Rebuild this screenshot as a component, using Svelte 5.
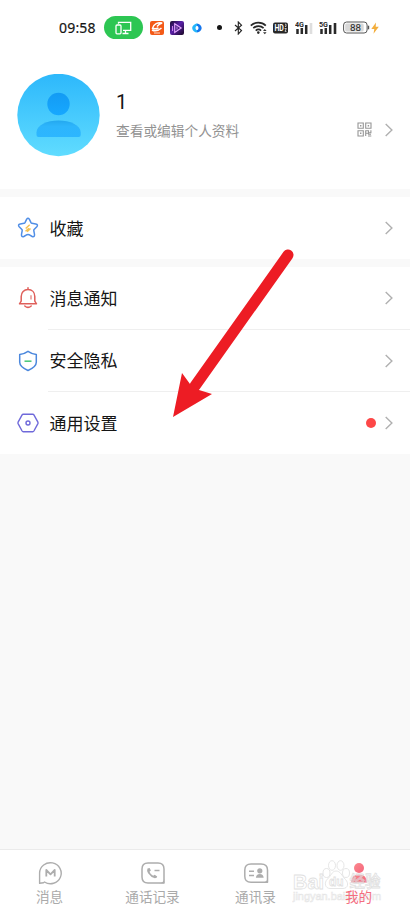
<script>
  const groups = [
    [{ icon: 'star', label: '收藏' }],
    [
      { icon: 'bell', label: '消息通知' },
      { icon: 'shield', label: '安全隐私' },
      { icon: 'hex', label: '通用设置', dot: true }
    ]
  ];
  const tabs = [
    { icon: 'message', label: '消息' },
    { icon: 'calls', label: '通话记录' },
    { icon: 'contacts', label: '通讯录' },
    { icon: 'me', label: '我的', active: true }
  ];
</script>

{#snippet chevron()}
  <svg class="chevron" width="10" height="14" viewBox="0 0 10 14"><path d="M1.700 1 7.900 7 1.700 13" fill="none" stroke="#b0b0b0" stroke-width="1.400" /></svg>
{/snippet}

{#snippet signal(name, last)}
  <svg class="signal" width="19" height="16" viewBox="0 0 19 16">
    <text x="0" y="7" font-size="8" font-weight="700" fill="#292929" textLength="9" lengthAdjust="spacingAndGlyphs">{name}</text>
    <path d="M2.500 9v5M6.800 8v6M11.200 5v9" stroke="#292929" stroke-width="2.500" />
    <path d="M16 3v11" stroke={last} stroke-width="2.600" />
  </svg>
{/snippet}

<main class="screen">
  <header class="status">
    <span class="time">09:58</span>
    <span class="cast">
      <svg width="17" height="14" viewBox="0 0 17 14" fill="none" stroke="#fff" stroke-width="1.300"><path d="M3.500 2.700V1.400h12.200v8H8M10.500 9.500v3M7.500 12.500h6" /><rect x="1" y="4" width="5" height="8.800" rx="1" /></svg>
    </span>
    <svg class="app1" width="14" height="14" viewBox="0 0 14 14"><rect width="14" height="14" rx="2" fill="#f35a18" /><path d="M12.200 2C8 .8 3.500 3 2.500 7.300c1.700.8 4 .6 6-.3M7 5.500C8.300 3.800 10 2.700 12.200 2M2 9c3 1.600 6.700.5 9.500-2" fill="none" stroke="#fff" stroke-width="1.500" /><path d="M4 12h6" stroke="#fff" stroke-width=".8" /></svg>
    <svg class="app2" width="14" height="14" viewBox="0 0 14 14"><defs><linearGradient id="vid" x2="1" y2="1"><stop stop-color="#170b2c" /><stop offset=".45" stop-color="#5a20a9" /><stop offset="1" stop-color="#180720" /></linearGradient></defs><rect width="14" height="14" rx="2" fill="url(#vid)" /><path d="m4.700 2.800 6.500 4.200-6.500 4.500Z" fill="#442080" stroke="#e8a9ff" stroke-width="1.100" /><path d="M2.500 5v5M7 5.500v3" stroke="#d98ff5" stroke-width=".9" /></svg>
    <svg class="app3" width="10" height="10" viewBox="0 0 10 10"><path d="M5 .4C3 .4 0 3 .2 5.200.4 7.800 2.800 9.500 5 9.500V7.200L3.500 5 5 3Z" fill="#24b6fa" /><path d="M5 .4c2.500.3 4.700 2.400 4.700 4.600S7.600 9.300 5 9.500V7.200L6.500 5 5 3Z" fill="#1576ed" /><ellipse cx="5" cy="5" rx="1.400" ry="2" fill="#fff" /></svg>
    <i class="notice"></i>
    <svg class="bt" width="9" height="14" viewBox="0 0 9 14"><path d="m1 4 6.500 5.600L4.300 13V1l3.200 3.200L1 10" fill="none" stroke="#252525" stroke-width="1.150" /></svg>
    <svg class="wifi" width="18" height="14" viewBox="0 0 18 14"><path d="M.8 4.600c4-4 11-4 15 0M3.300 7.200c3-2.800 7.500-2.800 10.300 0M5.700 9.600c1.700-1.500 3.800-1.500 5.400 0" fill="none" stroke="#282828" stroke-width="1.700" /><circle cx="8.300" cy="11.600" r="1.300" fill="#282828" /><path d="m13 10 1.800-2 1.800 2ZM13 11.300l1.800 2 1.800-2Z" fill="#333" /></svg>
    <svg class="hd" width="15" height="12" viewBox="0 0 15 12"><rect y=".5" width="15" height="11" rx="2" fill="#282828" /><text x="1.400" y="9" font-size="8.500" font-weight="700" fill="#fff" textLength="9.500" lengthAdjust="spacingAndGlyphs">HD</text><path d="M12 2.200h1v2.300h-1M11.600 6.500h1.700L12 9.400h1.500" stroke="#fff" stroke-width=".7" fill="none" /></svg>
    {@render signal('4G', '#dedede')}
    {@render signal('5G', '#292929')}
    <svg class="battery" width="27" height="13" viewBox="0 0 27 13"><rect x=".6" y="1" width="23.500" height="11" rx="3" fill="#fff" stroke="#555" stroke-width="1" /><rect x="2.200" y="2.600" width="18.500" height="7.800" rx="1.500" fill="#d8d8d8" /><path d="M25.500 4.700v3.600" stroke="#555" stroke-width="1.400" /><text x="7" y="9.800" font-size="9" fill="#222" textLength="11" lengthAdjust="spacingAndGlyphs">88</text></svg>
    <svg class="bolt" width="8" height="12" viewBox="0 0 8 12"><path d="M5 .4.300 7h3l-.8 4.800L7.800 4.700H4.700Z" fill="#f3ae3d" /></svg>
  </header>

  <section class="profile">
    <svg class="avatar" width="83" height="83" viewBox="0 0 83 83">
      <defs>
        <linearGradient id="sky" x2="0" y2="1"><stop stop-color="#2db8fb" /><stop offset="1" stop-color="#60dcff" /></linearGradient>
        <linearGradient id="head" x2="0" y2="1"><stop stop-color="#139bf4" /><stop offset="1" stop-color="#17a8ff" /></linearGradient>
        <linearGradient id="body" x2="0" y2="1"><stop stop-color="#24a8ef" /><stop offset=".35" stop-color="#2db5fc" /><stop offset="1" stop-color="#2cb6ff" /></linearGradient>
      </defs>
      <circle cx="41.500" cy="41" r="41.200" fill="url(#sky)" /><circle cx="41.500" cy="30" r="11.200" fill="url(#head)" />
      <path d="M19.500 61v-2.500C19.500 51 30 46.500 41.500 46.500S63.700 51 63.700 58.500V61q0 2-2 2H21.500q-2 0-2-2Z" fill="url(#body)" />
    </svg>
    <div class="who"><div class="name">1</div><div class="hint">查看或编辑个人资料</div></div>
    <svg class="qr" width="15" height="15" viewBox="0 0 15 15" fill="none" stroke="#969696" stroke-width="1.100"><path d="M1 1h5.300v5.300H1ZM8.700 1H14v5.300H8.700ZM1 8.700h5.300V14H1ZM8.700 14V8.700h2.800v2.500H8.700M13.900 8.200v2.500h-2.400v1.500H14M11 14h3.300" /><path d="M3 3.700h1.400M10.700 3.700h1.400M3 11.300h1.400" stroke-width="1.400" /></svg>
    {@render chevron()}
  </section>

  {#each groups as group}
    <section class="group">
      {#each group as row}
        <div class="row">
          <svg class="row-icon" width="22" height="22" viewBox="0 0 22 22" fill="none" stroke-width="1.400" stroke-linejoin="round">
            {#if row.icon === 'star'}
              <path d="M9.700 2.200q1.300-1.900 2.600 0l1.700 3.500q.3.500.9.600l3.900.6q2.700.7 1 2.800l-2.700 2.800q-.4.500-.3 1.100l.7 3.800q.3 2.900-2.300 2.100L12 17.700q-1-.4-2 0l-3.200 1.800q-2.600.8-2.300-2.100l.7-3.800q.1-.6-.3-1.100L2.200 9.700q-1.700-2.100 1-2.800l3.900-.6q.6-.1.900-.6Z" stroke="#508ee6" stroke-width="1.500" />
              <path d="m12.700 7.800-4 3.700M12 11.300l-3.500 3M13.500 11.500l-3.400 3.200" stroke="#f5c151" stroke-width="1.500" />
            {:else if row.icon === 'bell'}
              <path d="M2.500 16.800h17l-1.700-2.700V9.500c0-4.200-2.800-7-6.800-7s-6.800 2.800-6.800 7v4.600ZM11 .8v1.500M7.800 19q3.200 2.800 6.400 0" stroke="#df5f5a" stroke-width="1.500" stroke-linecap="round" /><path d="M14 8.200v4.300" stroke="#e58b86" />
            {:else if row.icon === 'shield'}
              <path d="M11 1.300q3.700 2.600 8.300 3.200v7.700q0 4.500-8.300 8.300-8.300-3.800-8.300-8.300V4.500Q7.300 3.900 11 1.300Z" stroke="#4c88dd" stroke-width="1.500" /><path d="M7.500 11.200h7" stroke="#4fc97d" stroke-width="1.600" />
            {:else}
              <path d="M6.200 2.200h9.600q.7 0 1.100.7l4 7.300q.3.700 0 1.400l-4 7.400q-.4.700-1.100.7H6.200q-.7 0-1.100-.7l-4-7.400q-.3-.7 0-1.400l4-7.300q.4-.7 1.100-.7Z" stroke="#6f69da" /><circle cx="11" cy="11" r="2" stroke="#6f69da" />
            {/if}
          </svg>
          <div class="cell"><span class="label">{row.label}</span>{#if row.dot}<i class="badge"></i>{/if}{@render chevron()}</div>
        </div>
      {/each}
    </section>
  {/each}

  <nav class="tabs">
    {#each tabs as tab}
      <div class="tab" class:active={tab.active}>
        <svg width="26" height="24" viewBox="0 0 26 24" fill="none" stroke="#adadad" stroke-width="1.500" stroke-linejoin="round">
          {#if tab.icon === 'message'}
            <path d="M2.600 22.300V12A10.800 10.500 0 1 1 7.500 21L6.500 21.700 2.600 22.300Z" stroke-width="1.400" /><path d="M9.300 15.500V9l4.200 4.300L17.700 9v6.500" stroke-width="1.800" />
          {:else if tab.icon === 'calls'}
            <path d="M8 2h10q6 0 6 6v14H8q-6 0-6-6V8q0-6 6-6Z" /><path d="M19 22.200q4 0 5.200-4v4Z" fill="#adadad" stroke="none" /><path d="M7.500 7.500q-1 2 .6 4.700 2.700 4 6.800 5 2.300 0 2.300-1.800l-2.500-1.700-1.600 1q-2.600-1.200-3.600-4l1.400-1.100-1.300-2.700Z" fill="#adadad" stroke="none" /><path d="M14.500 9.500h5" />
          {:else if tab.icon === 'contacts'}
            <path d="M8 3h10q6.500 0 6.500 6v12.300H8q-6.200 0-6.200-6V9Q1.800 3 8 3Z" /><path d="M20 21.500q3.800-.5 4.700-4v4Z" fill="#adadad" stroke="none" /><path d="M6 10.200h5M6 14.500h5" /><circle cx="16.800" cy="9.800" r="2.600" fill="#adadad" stroke="none" /><path d="M12.900 16.700q.3-3.800 3.900-3.800t3.900 3.800Z" fill="#adadad" stroke="none" />
          {:else}
            <defs><linearGradient id="pink" x2="1" y2="1"><stop stop-color="#fb8a8e" /><stop offset="1" stop-color="#f5647c" /></linearGradient></defs>
            <circle cx="13" cy="7" r="5" fill="url(#pink)" stroke="none" /><path d="M5 21.500q.3-8 8-8t8 8Z" fill="url(#pink)" stroke="none" />
          {/if}
        </svg>
        <span>{tab.label}</span>
      </div>
    {/each}
  </nav>

  <svg class="watermark" width="94" height="46" viewBox="0 0 94 46">
    <g fill="#fff" fill-opacity=".65" stroke="#d6d6d6" stroke-width=".8">
      <text x="1" y="30.500" font-size="21" font-weight="700" textLength="31" lengthAdjust="spacingAndGlyphs">Bai</text>
      <ellipse cx="34.500" cy="15" rx="3.500" ry="4.500" /><ellipse cx="40" cy="7.500" rx="3.500" ry="4.800" /><ellipse cx="48.500" cy="7.500" rx="3.500" ry="4.800" /><ellipse cx="54" cy="15" rx="3.500" ry="4.500" />
      <path d="M44 13c-4 0-5 5-8.500 8-4 4-2 9.500 2.500 9.500h13c5 0 6-5.500 2.500-9-4-4-5-8.500-9.500-8.500Z" />
      <text x="37" y="28" font-size="13" font-weight="700" textLength="14.500" lengthAdjust="spacingAndGlyphs">du</text>
      <text x="57.500" y="29" font-size="16" font-weight="500" textLength="31" lengthAdjust="spacingAndGlyphs">经验</text>
    </g>
    <text x="1" y="42" font-size="11" fill="#fff" stroke="#ddd" stroke-width=".6" textLength="88" lengthAdjust="spacingAndGlyphs">jingyan.baidu.com</text>
  </svg>
  <svg class="arrow" width="124" height="172" viewBox="0 0 124 172"><path d="M117 9 24 140" stroke="#ed1c24" stroke-width="11" stroke-linecap="round" /><path d="m2 171 9-44 8 11 9 6 13 4Z" fill="#ed1c24" /></svg>
</main>

<style>
  :global(body) { margin: 0; }
  .screen { position: relative; width: 410px; height: 914px; display: flex; flex-direction: column; overflow: hidden; background: #f9f9f9; color: #151515; font-family: Roboto, "Noto Sans CJK SC", sans-serif; }
  svg { display: block; flex: none; }
  .status { height: 55px; box-sizing: border-box; padding-left: 59px; display: flex; align-items: center; background: #fff; }
  .time { width: 45px; font: 400 14px/20px "Noto Sans", sans-serif; letter-spacing: .2px; -webkit-text-stroke: .2px; }
  .cast { width: 39px; height: 23px; display: grid; place-items: center; border-radius: 12px; background: #2dc653; }
  .app1 { margin-left: 7px; }
  .app2 { margin-left: 6px; }
  .app3 { margin-left: 8px; }
  .notice { width: 5px; height: 5px; margin: 0 12px 0 15px; border-radius: 50%; background: #151515; }
  .wifi { margin-left: 7px; }
  .hd { margin: 0 7px 0 5px; }
  .signal { margin-right: 5px; }
  .bolt { margin-left: 1px; }
  .profile { height: 134px; box-sizing: border-box; padding: 0 16px 0 17px; display: flex; align-items: flex-start; background: #fff; }
  .avatar { margin-top: 19px; }
  .who { flex: 1; margin: 35px 0 0 16px; }
  .name { font-size: 20px; line-height: 25px; }
  .hint { margin-top: 6px; font-size: 13.700px; line-height: 21px; color: #929292; }
  .qr { margin: 67px 12px 0 0; }
  .profile :global(.chevron) { margin-top: 68px; }
  .group { margin-top: 8px; padding-left: 17px; background: #fff; }
  .row { display: flex; align-items: center; height: 62px; }
  .row + .row { height: 62.400px; }
  .row-icon { position: relative; top: .4px; margin-left: -.5px; }
  .cell { display: flex; align-items: center; flex: 1; height: 100%; box-sizing: border-box; margin-left: 9.500px; padding: 0 16px 0 1.500px; }
  .row + .row .cell { padding-top: 1px; background: linear-gradient(#efefef, #efefef) top / 100% 1px no-repeat; }
  .label { flex: 1; padding-top: 1.500px; font-size: 17px; line-height: 24px; }
  .badge { width: 10px; height: 10px; margin-right: 8px; border-radius: 50%; background: #fd4747; }
  .tabs { display: flex; height: 65px; box-sizing: border-box; margin-top: auto; margin-left: -2px; border-top: 1px solid #ebebeb; background: #fff; }
  .tab { flex: 1; display: flex; flex-direction: column; align-items: center; padding-top: 11px; color: #aaa; font-size: 13.600px; line-height: 20px; }
  .tab span { margin-top: 2px; }
  .tab.active { color: #f46e7f; }
  .tab.active span { position: relative; z-index: 2; }
  .watermark { position: absolute; left: 292px; top: 858px; font-family: "Liberation Sans", "Noto Sans CJK SC", sans-serif; opacity: .75; }
  .arrow { position: absolute; left: 171px; top: 246px; }
</style>
